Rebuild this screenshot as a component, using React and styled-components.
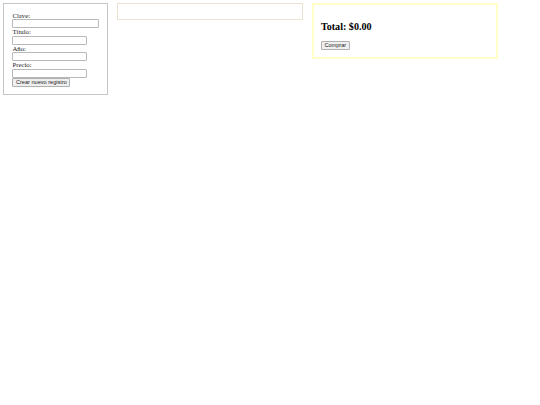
import React, { useState } from 'react';
import styled, { createGlobalStyle } from 'styled-components';

const GlobalStyle = createGlobalStyle`
  body {
    margin: 3.4px;
    background: #ffffff;
    font-family: "Liberation Serif", "Times New Roman", serif;
    font-size: 6.75px;
    color: #000;
  }
`;

const Page = styled.div`
  display: flex;
  align-items: flex-start;
  gap: 9px;
`;

const Form = styled.form`
  width: 86.5px;
  padding: 7.5px 8px;
  border: 1px solid #c6c6c6;
`;

const Label = styled.label`
  display: block;
  line-height: 7.6px;
  color: #222;
`;

const Input = styled.input`
  display: block;
  box-sizing: border-box;
  width: ${(p) => (p.$wide ? '87px' : '74.5px')};
  height: 8.9px;
  margin: 0;
  padding: 0 1px;
  border: 1px solid #b8b8b8;
  border-radius: 1px;
  background: #fff;
  font-family: "Liberation Sans", Arial, sans-serif;
  font-size: 5.6px;
`;

const Button = styled.button`
  display: block;
  box-sizing: border-box;
  height: 8.9px;
  margin: 0;
  padding: 0 2.5px;
  border: 1px solid #b0b0b0;
  border-radius: 1px;
  background: #efefef;
  font-family: "Liberation Sans", Arial, sans-serif;
  font-size: 5.6px;
  line-height: 6.5px;
  color: #222;
`;

const List = styled.div`
  width: 169px;
  padding: 7.5px;
  border: 1px solid #ebe2cf;
`;

const Cart = styled.div`
  width: 168.5px;
  padding: 7px;
  border: 2px solid #ffffc6;
`;

const Total = styled.h2`
  margin: 8.4px 0;
  font-size: 10.1px;
  line-height: 11.6px;
  font-weight: bold;
`;

const fields = [
  { name: 'clave', label: 'Clave:', wide: true },
  { name: 'titulo', label: 'Título:' },
  { name: 'anio', label: 'Año:' },
  { name: 'precio', label: 'Precio:' },
];

const App = () => {
  const [items] = useState([]);
  const total = items.reduce((sum, it) => sum + it.precio, 0);

  return (
    <>
      <GlobalStyle />
      <Page>
        <Form onSubmit={(e) => e.preventDefault()}>
          {fields.map((f) => (
            <div key={f.name}>
              <Label htmlFor={f.name}>{f.label}</Label>
              <Input id={f.name} name={f.name} $wide={f.wide} />
            </div>
          ))}
          <Button type="submit">Crear nuevo registro</Button>
        </Form>
        <List />
        <Cart>
          <Total>Total: ${total.toFixed(2)}</Total>
          <Button>Comprar</Button>
        </Cart>
      </Page>
    </>
  );
};

export default App;
